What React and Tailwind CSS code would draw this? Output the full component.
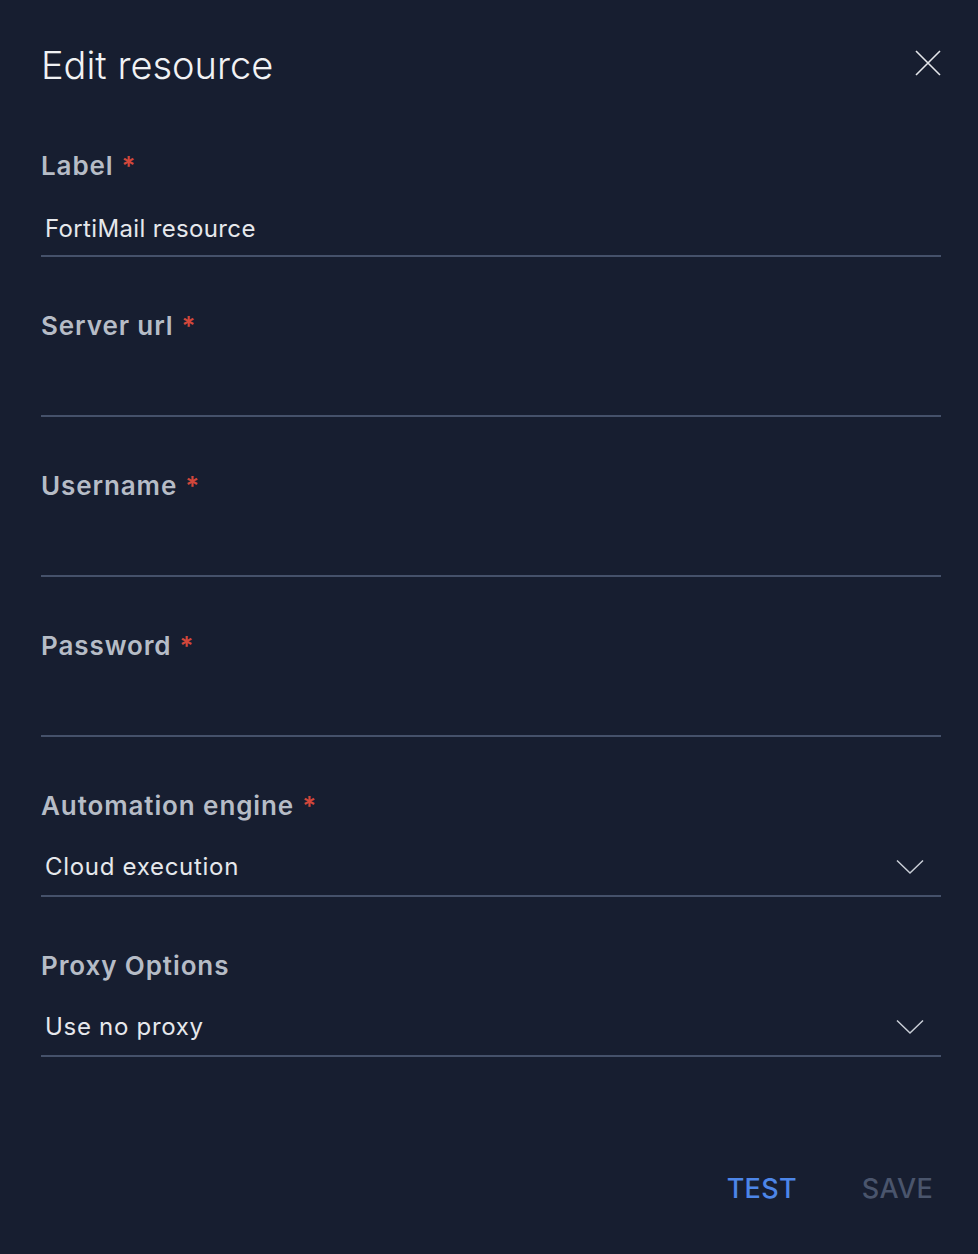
import { useState } from 'react';

const fields = [
  { name: 'label', label: 'Label', required: true, value: 'FortiMail resource' },
  { name: 'url', label: 'Server url', required: true, value: '' },
  { name: 'username', label: 'Username', required: true, value: '' },
  { name: 'password', label: 'Password', required: true, value: '' },
  { name: 'engine', label: 'Automation engine', required: true, value: 'Cloud execution', select: true },
  { name: 'proxy', label: 'Proxy Options', required: false, value: 'Use no proxy', select: true },
];

const Chevron = () => (
  <svg width="28" height="16" viewBox="0 0 28 16" fill="none" className="text-[#c9ced6]">
    <path d="M1 1.5 L14 14 L27 1.5" stroke="currentColor" strokeWidth="1.5" />
  </svg>
);

const Field = ({ field, first }) => {
  const [value, setValue] = useState(field.value);

  return (
    <div className={first ? 'mt-[61px]' : 'mt-[53px]'}>
      <div className="h-8 leading-8 text-[26px] font-semibold tracking-[0.9px] text-[#b6bcc6]">
        {field.label}
        {field.required && <span className="ml-2 text-[#d2473b]">*</span>}
      </div>
      {field.select ? (
        <div className="h-[75px] flex items-end pb-[12px] border-b-2 border-[#45516a]">
          <div className="flex w-full items-center justify-between pl-1 pr-[17px]">
            <span className="h-8 leading-8 text-[24px] tracking-[0.7px] text-[#e6e8ec]">{value}</span>
            <Chevron />
          </div>
        </div>
      ) : (
        <div className="h-[75px] flex items-end pb-[10px] border-b-2 border-[#45516a]">
          <input
            value={value}
            onChange={(e) => setValue(e.target.value)}
            className="w-full h-8 pl-1 bg-transparent outline-none text-[24px] tracking-[0.35px] text-[#e6e8ec]"
          />
        </div>
      )}
    </div>
  );
};

const App = () => {
  return (
    <div
      className="min-h-[1254px] w-full bg-[#171e30] pl-[41px] pr-[37px] pt-[41px]"
      style={{ fontFamily: 'Inter, "Noto Sans", sans-serif' }}
    >
      <div className="flex items-center justify-between h-12">
        <h1 className="text-[38px] leading-[48px] font-light text-[#f1f2f4]">Edit resource</h1>
        <button className="-mt-1 text-[#e4e6ea]">
          <svg width="26" height="26" viewBox="0 0 26 26" fill="none">
            <path d="M1 1 L25 25 M25 1 L1 25" stroke="currentColor" strokeWidth="1.6" />
          </svg>
        </button>
      </div>

      {fields.map((f, i) => (
        <Field key={f.name} field={f} first={i === 0} />
      ))}

      <div className="mt-[116px] flex justify-end gap-[65px] pr-[8px]">
        <button className="h-8 leading-8 text-[27px] font-medium tracking-[0.3px] text-[#4d86e8]">TEST</button>
        <button className="h-8 leading-8 text-[27px] font-medium tracking-[0.3px] text-[#4a556c]">SAVE</button>
      </div>
    </div>
  );
};

export default App;
